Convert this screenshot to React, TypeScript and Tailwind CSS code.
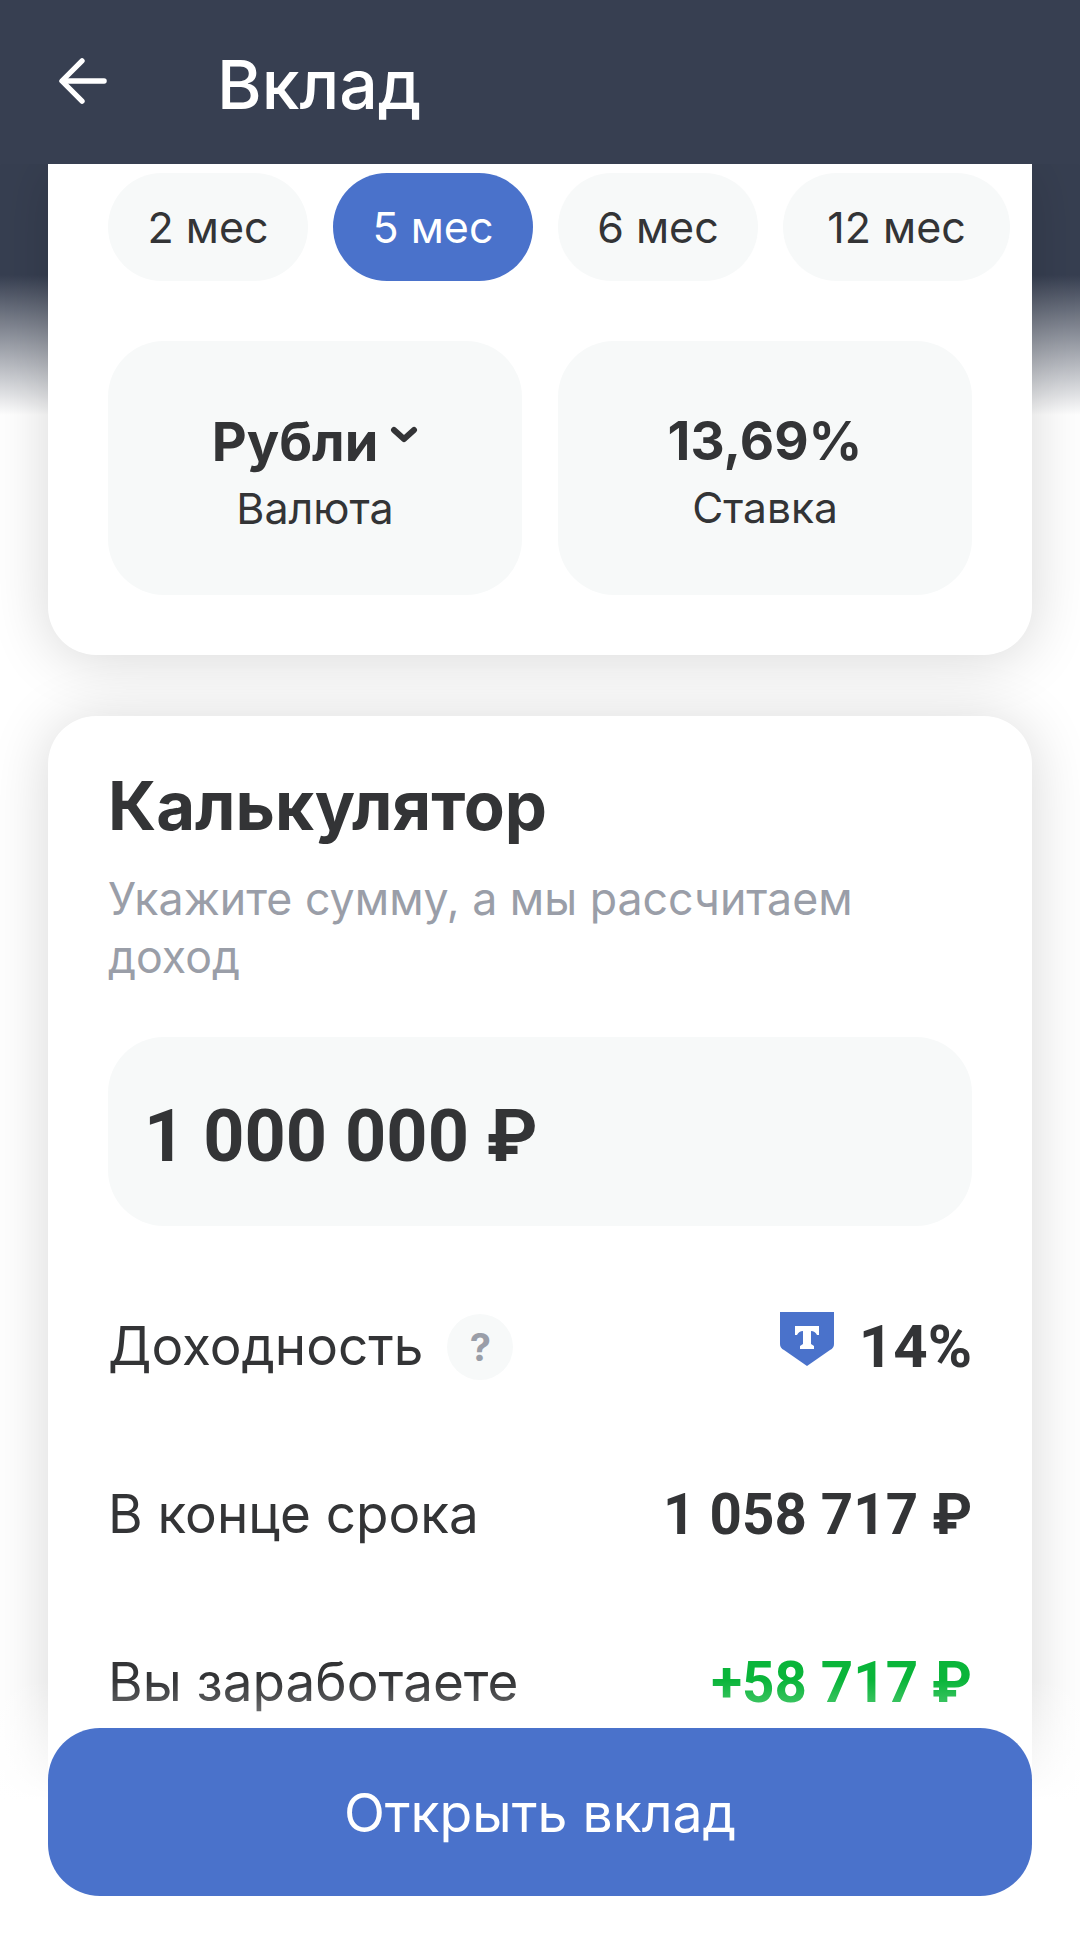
import React from "react";

const chips = [
  { t: "2 мес", w: "w-[200px]" },
  { t: "5 мес", w: "w-[200px]", active: true },
  { t: "6 мес", w: "w-[200px]" },
  { t: "12 мес", w: "w-[227px]" },
];

function Row({ label, children, className }: { label: React.ReactNode; children: React.ReactNode; className?: string }) {
  return (
    <div className="flex h-[168px] items-center justify-between">
      <div className="flex items-center text-[53px] text-[#333436]">{label}</div>
      <div className={className}>{children}</div>
    </div>
  );
}

export default function App() {
  return (
    <div
      className="relative h-[1947px] w-[1080px] overflow-hidden bg-white bg-[linear-gradient(to_bottom,#373f51_0px,#373f51_275px,#ffffff_415px)] text-[#333436]"
      style={{ fontFamily: "Inter, 'Noto Sans', sans-serif" }}
    >
      <header className="relative z-10 flex h-[164px] items-center bg-[#373f51] pl-[59px] text-white">
        <svg width="48" height="48" viewBox="0 0 50 50" fill="none" stroke="white" strokeWidth="5.5" strokeLinecap="round" strokeLinejoin="round" className="mt-[-3px]">
          <path d="M47 25H4" />
          <path d="M24 4 3 25l21 21" />
        </svg>
        <h1 className="ml-[110px] mt-[4px] text-[68px] font-medium leading-none">Вклад</h1>
      </header>

      <section className="mx-[48px] h-[491px] rounded-b-[48px] bg-white pl-[60px] pt-[9px] shadow-[0_4px_60px_rgba(0,0,0,0.16)]">
        <div className="flex gap-[25px]">
          {chips.map((c) => (
            <div
              key={c.t}
              className={`flex h-[108px] items-center justify-center rounded-full text-[43px] ${c.w} ${c.active ? "bg-[#4a72cb] text-white" : "bg-[#f7f9f9]"}`}
            >
              {c.t}
            </div>
          ))}
        </div>
        <div className="mt-[60px] flex gap-[36px]">
          <div className="flex h-[254px] w-[414px] flex-col items-center justify-center rounded-[56px] bg-[#f7f9f9]">
            <div className="mt-[10px] flex items-center text-[54px] font-bold leading-[63px]">
              Рубли
              <svg width="28" height="20" viewBox="0 0 28 20" fill="none" stroke="#333436" strokeWidth="6" strokeLinecap="round" strokeLinejoin="round" className="ml-[12px] mt-[-12px]">
                <path d="M4 5l10 9 10-9" />
              </svg>
            </div>
            <div className="mt-[6px] text-[43px] leading-[58px]">Валюта</div>
          </div>
          <div className="flex h-[254px] w-[414px] flex-col items-center justify-center rounded-[56px] bg-[#f7f9f9]">
            <div className="mt-[10px] text-[53px] font-bold leading-[63px]">13,69%</div>
            <div className="mt-[6px] text-[42.5px] leading-[58px]">Ставка</div>
          </div>
        </div>
      </section>

      <section className="mx-[48px] mt-[61px] h-[1300px] rounded-[48px] bg-white px-[60px] pt-[50px] shadow-[0_4px_60px_rgba(0,0,0,0.16)]">
        <h2 className="text-[67px] font-bold leading-[80px]">Калькулятор</h2>
        <p className="mt-[24px] w-[800px] text-[44.7px] leading-[58px] text-[#9a9ea8]">Укажите сумму, а мы рассчитаем доход</p>
        <div className="mt-[51px] flex h-[189px] items-center rounded-[56px] bg-[#f7f9f9] pl-[36px] pt-[10px] text-[72px] font-bold" style={{ fontFamily: "Roboto, sans-serif" }}>1 000 000 ₽</div>
        <div className="mt-[37px]">
          <Row
            className="flex items-center text-[60px] font-bold"
            label={
              <>
                Доходность
                <span className="ml-[24px] flex h-[66px] w-[66px] items-center justify-center rounded-full bg-[#f7f9f9] text-[38px] font-bold text-[#9a9ea8]">?</span>
              </>
            }
          >
            <svg width="54" height="54" viewBox="0 0 54 54" className="mr-[25px] mt-[-16px]">
              <path d="M0 0H54V32Q54 36 50 38L27 54 4 38Q0 36 0 32Z" fill="#4a72cb" />
              <path d="M15 14H39V23H37Q35 19 31 19V32L34 34V37H20V34L23 32V19Q19 19 17 23H15Z" fill="white" />
            </svg>
            <span style={{ fontFamily: "Roboto, sans-serif" }}>14%</span>
          </Row>
          <Row label="В конце срока" className="text-[56.5px] font-bold">
            <span style={{ fontFamily: "Roboto, sans-serif" }}>1 058 717 ₽</span>
          </Row>
          <Row label="Вы заработаете" className="text-[56.5px] font-bold text-[#0ab53a]">
            <span style={{ fontFamily: "Roboto, sans-serif" }}>+58 717 ₽</span>
          </Row>
        </div>
      </section>

      <div className="absolute left-0 top-[1680px] h-[120px] w-full bg-[linear-gradient(to_bottom,rgba(255,255,255,0),#ffffff)]" />
      <div className="absolute bottom-0 left-0 h-[147px] w-full bg-white" />
      <button className="absolute left-[48px] top-[1728px] flex h-[168px] w-[984px] items-center justify-center rounded-[52px] bg-[#4a72cb] pt-[3px] text-[53.5px] text-white">
        Открыть вклад
      </button>
    </div>
  );
}
